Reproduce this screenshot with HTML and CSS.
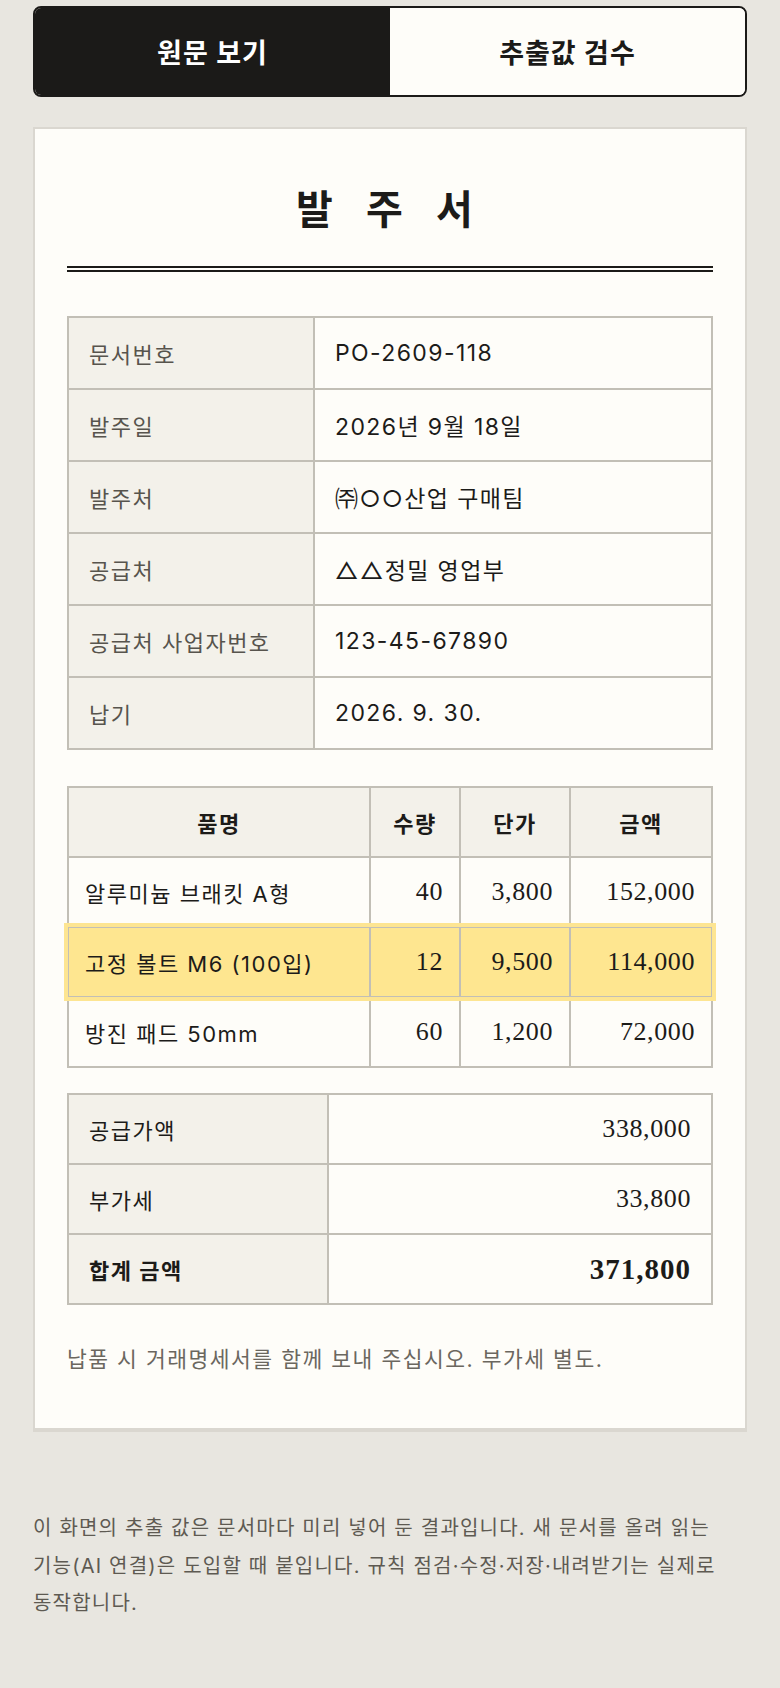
FILE: index.html
```html
<!DOCTYPE html>
<html lang="ko">
<head>
<meta charset="utf-8">
<title>발주서</title>
<link rel="stylesheet" href="styles.css">
</head>
<body>
<div class="page">
  <div class="seg">
    <button class="seg-btn active">원문 보기</button>
    <button class="seg-btn">추출값 검수</button>
  </div>

  <div class="doc">
    <h1 class="doc-title">발 주 서</h1>

    <table class="info">
      <tr><th>문서번호</th><td>PO-2609-118</td></tr>
      <tr><th>발주일</th><td>2026년 9월 18일</td></tr>
      <tr><th>발주처</th><td>㈜○○산업 구매팀</td></tr>
      <tr><th>공급처</th><td>△△정밀 영업부</td></tr>
      <tr><th>공급처 사업자번호</th><td>123-45-67890</td></tr>
      <tr><th>납기</th><td>2026. 9. 30.</td></tr>
    </table>

    <table class="items">
      <colgroup>
        <col class="c-name"><col class="c-qty"><col class="c-price"><col class="c-amt">
      </colgroup>
      <thead>
        <tr><th>품명</th><th>수량</th><th>단가</th><th>금액</th></tr>
      </thead>
      <tbody>
        <tr><td class="name">알루미늄 브래킷 A형</td><td class="num">40</td><td class="num">3,800</td><td class="num">152,000</td></tr>
        <tr class="hl"><td class="name">고정 볼트 M6 (100입)</td><td class="num">12</td><td class="num">9,500</td><td class="num">114,000</td></tr>
        <tr><td class="name">방진 패드 50mm</td><td class="num">60</td><td class="num">1,200</td><td class="num">72,000</td></tr>
      </tbody>
    </table>

    <table class="sum">
      <tr><th>공급가액</th><td class="num">338,000</td></tr>
      <tr><th>부가세</th><td class="num">33,800</td></tr>
      <tr class="total"><th>합계 금액</th><td class="num">371,800</td></tr>
    </table>

    <p class="doc-note">납품 시 거래명세서를 함께 보내 주십시오. 부가세 별도.</p>
  </div>

  <p class="footnote">이 화면의 추출 값은 문서마다 미리 넣어 둔 결과입니다. 새 문서를 올려 읽는 기능(AI 연결)은 도입할 때 붙입니다. 규칙 점검·수정·저장·내려받기는 실제로 동작합니다.</p>
</div>
</body>
</html>
```

FILE: styles.css
```css
html, body {
  margin: 0;
  padding: 0;
  background: #e8e6e0;
}

body {
  font-family: Inter, "Noto Sans CJK KR", sans-serif;
  color: #1c1b19;
  letter-spacing: 1.5px;
  word-break: keep-all;
}

.page {
  padding: 6px 33px 40px;
}

.seg {
  display: grid;
  grid-template-columns: 1fr 1fr;
  height: 91px;
  box-sizing: border-box;
  border: 2px solid #1b1a18;
  border-radius: 8px;
  overflow: hidden;
  background: #fefdf9;
}

.seg-btn {
  border: 0;
  margin: 0;
  padding: 0;
  background: #fefdf9;
  font-family: Inter, "Noto Sans CJK KR", sans-serif;
  font-size: 27px;
  font-weight: 700;
  letter-spacing: 1px;
  color: #1b1a18;
}

.seg-btn.active {
  background: #1b1a18;
  color: #ffffff;
}

.doc {
  margin-top: 30px;
  background: #fefdf9;
  border: 2px solid #dad7d0;
  border-bottom-width: 4px;
  padding: 48px 32px 54px;
}

.doc-title {
  margin: 0;
  padding-bottom: 29px;
  border-bottom: 6px double #1b1a18;
  text-align: center;
  font-family: "Noto Sans CJK KR", sans-serif;
  font-size: 40px;
  line-height: 60px;
  font-weight: 700;
  letter-spacing: 11px;
}

table {
  width: 100%;
  border-collapse: collapse;
  table-layout: fixed;
}

th, td {
  border: 2px solid #c2bfb6;
  font-size: 22px;
  font-weight: 400;
  text-align: left;
  padding: 0 20px;
}

.info {
  margin-top: 44px;
}

.info th {
  width: 204px;
  height: 70px;
  background: #f3f1ea;
  color: #57544d;
}

.info td {
  height: 70px;
  font-size: 23px;
  letter-spacing: 1.4px;
  color: #1c1b19;
}

.items {
  margin-top: 36px;
}

.items .c-name { width: 302px; }
.items .c-qty { width: 90px; }
.items .c-price { width: 110px; }

.items th {
  height: 68px;
  padding: 0 16px;
  background: #f3f1ea;
  font-weight: 700;
  text-align: center;
  color: #1c1b19;
}

.items td {
  height: 68px;
  padding: 0 16px;
}

.num {
  text-align: right;
  font-family: "Liberation Serif", "Times New Roman", serif;
  font-size: 26px;
  letter-spacing: 0.6px;
}

.items tr.hl td {
  background: #fee690;
}

.items tr.hl {
  outline: 4px solid #fde592;
  outline-offset: 0;
}

.sum {
  margin-top: 25px;
}

.sum th {
  width: 218px;
  height: 68px;
  background: #f3f1ea;
  color: #1c1b19;
}

.sum td {
  height: 68px;
}

.sum tr.total th {
  font-weight: 700;
}

.sum tr.total td {
  font-weight: 700;
  font-size: 29px;
  letter-spacing: 1px;
}

.doc-note {
  margin: 40px 0 0;
  font-size: 21.5px;
  line-height: 29px;
  color: #6b675f;
}

.footnote {
  margin: 78px 0 0;
  font-size: 20px;
  line-height: 37.5px;
  letter-spacing: 1.2px;
  color: #5e5a52;
}
```
